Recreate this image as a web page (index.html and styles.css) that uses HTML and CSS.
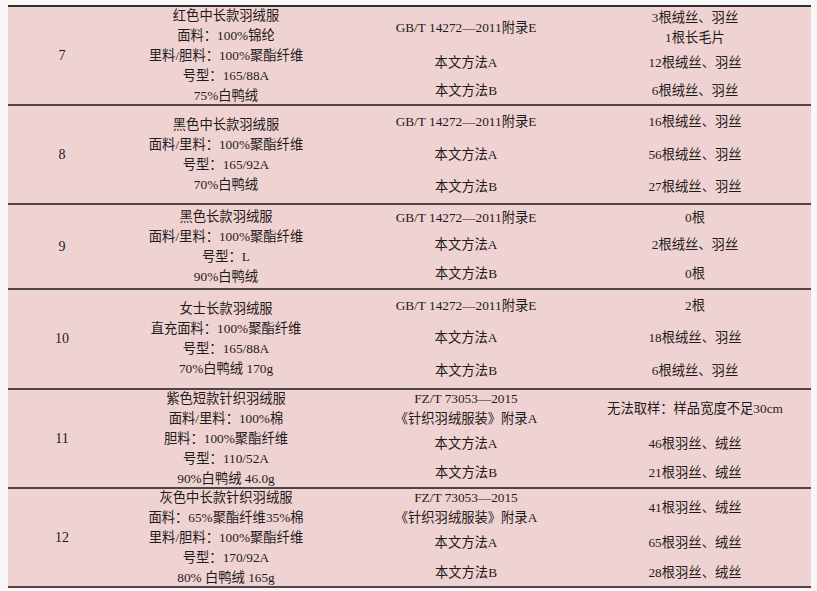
FILE: index.html
```html
<!DOCTYPE html>
<html lang="zh">
<head>
<meta charset="utf-8">
<title>羽绒服钻绒测试结果</title>
<link rel="stylesheet" href="styles.css">
</head>
<body>
<div class="sheet">
  <div class="group g7">
    <div class="no">7</div>
    <div class="desc">
      <p>红色中长款羽绒服</p>
      <p>面料：100%锦纶</p>
      <p>里料/胆料：100%聚酯纤维</p>
      <p>号型：165/88A</p>
      <p>75%白鸭绒</p>
    </div>
    <div class="method s1">GB/T 14272—2011附录E</div>
    <div class="result s1"><p>3根绒丝、羽丝</p><p>1根长毛片</p></div>
    <div class="method s2">本文方法A</div>
    <div class="result s2">12根绒丝、羽丝</div>
    <div class="method s3">本文方法B</div>
    <div class="result s3">6根绒丝、羽丝</div>
  </div>
  <div class="group g8">
    <div class="no">8</div>
    <div class="desc">
      <p>黑色中长款羽绒服</p>
      <p>面料/里料：100%聚酯纤维</p>
      <p>号型：165/92A</p>
      <p>70%白鸭绒</p>
    </div>
    <div class="method s1">GB/T 14272—2011附录E</div>
    <div class="result s1">16根绒丝、羽丝</div>
    <div class="method s2">本文方法A</div>
    <div class="result s2">56根绒丝、羽丝</div>
    <div class="method s3">本文方法B</div>
    <div class="result s3">27根绒丝、羽丝</div>
  </div>
  <div class="group g9">
    <div class="no">9</div>
    <div class="desc">
      <p>黑色长款羽绒服</p>
      <p>面料/里料：100%聚酯纤维</p>
      <p>号型：L</p>
      <p>90%白鸭绒</p>
    </div>
    <div class="method s1">GB/T 14272—2011附录E</div>
    <div class="result s1">0根</div>
    <div class="method s2">本文方法A</div>
    <div class="result s2">2根绒丝、羽丝</div>
    <div class="method s3">本文方法B</div>
    <div class="result s3">0根</div>
  </div>
  <div class="group g10">
    <div class="no">10</div>
    <div class="desc">
      <p>女士长款羽绒服</p>
      <p>直充面料：100%聚酯纤维</p>
      <p>号型：165/88A</p>
      <p>70%白鸭绒 170g</p>
    </div>
    <div class="method s1">GB/T 14272—2011附录E</div>
    <div class="result s1">2根</div>
    <div class="method s2">本文方法A</div>
    <div class="result s2">18根绒丝、羽丝</div>
    <div class="method s3">本文方法B</div>
    <div class="result s3">6根绒丝、羽丝</div>
  </div>
  <div class="group g11">
    <div class="no">11</div>
    <div class="desc">
      <p>紫色短款针织羽绒服</p>
      <p>面料/里料：100%棉</p>
      <p>胆料：100%聚酯纤维</p>
      <p>号型：110/52A</p>
      <p>90%白鸭绒 46.0g</p>
    </div>
    <div class="method s1"><p>FZ/T 73053—2015</p><p>《针织羽绒服装》附录A</p></div>
    <div class="result s1">无法取样：样品宽度不足30cm</div>
    <div class="method s2">本文方法A</div>
    <div class="result s2">46根羽丝、绒丝</div>
    <div class="method s3">本文方法B</div>
    <div class="result s3">21根羽丝、绒丝</div>
  </div>
  <div class="group g12">
    <div class="no">12</div>
    <div class="desc">
      <p>灰色中长款针织羽绒服</p>
      <p>面料：65%聚酯纤维35%棉</p>
      <p>里料/胆料：100%聚酯纤维</p>
      <p>号型：170/92A</p>
      <p>80% 白鸭绒 165g</p>
    </div>
    <div class="method s1"><p>FZ/T 73053—2015</p><p>《针织羽绒服装》附录A</p></div>
    <div class="result s1">41根羽丝、绒丝</div>
    <div class="method s2">本文方法A</div>
    <div class="result s2">65根羽丝、绒丝</div>
    <div class="method s3">本文方法B</div>
    <div class="result s3">28根羽丝、绒丝</div>
  </div>
</div>
</body>
</html>
```
FILE: styles.css
```css
html, body {
  margin: 0;
  padding: 0;
  background: #f7f7f7;
}
body {
  font-family: "Liberation Serif", "Noto Sans CJK SC", serif;
  font-size: 13.3px;
  color: #1f1a1b;
}
p {
  margin: 0;
}
.sheet {
  margin: 5px 6px 0 8px;
  width: 803px;
  background: #efd3d2;
  border-top: 2px solid #353030;
}
.group {
  display: grid;
  grid-template-columns: 108px 220px 260px 198px;
  padding-right: 17px;
  border-bottom: 2px solid #4f4545;
  line-height: 20px;
}
.g7 { grid-template-rows: 42px 28px 27px; }
.g8 { grid-template-rows: 32px 33px 32px; }
.g9 { grid-template-rows: 25px 29px 29px; }
.g10 { grid-template-rows: 31px 33px 34px; }
.g11 { grid-template-rows: 38px 31px 28px; }
.g12 { grid-template-rows: 37px 33px 27px; }
.no, .desc, .method, .result {
  display: flex;
  flex-direction: column;
  align-items: center;
  justify-content: center;
  text-align: center;
  white-space: nowrap;
}
.no {
  grid-column: 1;
  grid-row: 1 / span 3;
  font-size: 14px;
}
.desc {
  grid-column: 2;
  grid-row: 1 / span 3;
}
.method { grid-column: 3; }
.result { grid-column: 4; }
.s1 { grid-row: 1; }
.s2 { grid-row: 2; }
.s3 { grid-row: 3; }
```
